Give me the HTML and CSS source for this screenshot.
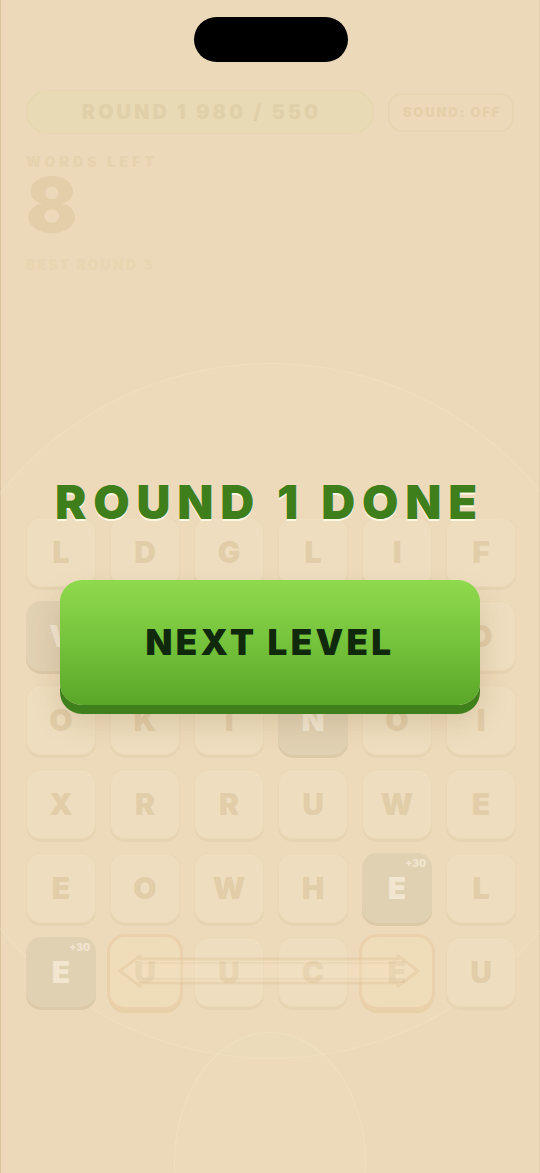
FILE: index.html
```html
<!DOCTYPE html>
<html lang="en">
<head>
<meta charset="utf-8">
<title>Round 1 Done</title>
<link rel="stylesheet" href="styles.css">
</head>
<body>
<div class="app">
  <div class="glow glow-a"></div>
  <div class="glow glow-b"></div>
  <div class="game">
    <div class="island"></div>
    <div class="topbar">
      <div class="score-pill">ROUND 1 980 / 550</div>
      <div class="sound-btn">SOUND: OFF</div>
    </div>
    <div class="stats">
      <div class="label">WORDS LEFT</div>
      <div class="count">8</div>
      <div class="best">BEST ROUND 3</div>
    </div>
    <div class="grid">
      <div class="tile">L</div>
      <div class="tile">D</div>
      <div class="tile">G</div>
      <div class="tile">L</div>
      <div class="tile">I</div>
      <div class="tile">F</div>

      <div class="tile dark">V</div>
      <div class="tile"></div>
      <div class="tile"></div>
      <div class="tile"></div>
      <div class="tile"></div>
      <div class="tile">O</div>

      <div class="tile">O</div>
      <div class="tile">K</div>
      <div class="tile">I</div>
      <div class="tile dark">N</div>
      <div class="tile">O</div>
      <div class="tile">I</div>

      <div class="tile">X</div>
      <div class="tile">R</div>
      <div class="tile">R</div>
      <div class="tile">U</div>
      <div class="tile">W</div>
      <div class="tile">E</div>

      <div class="tile">E</div>
      <div class="tile">O</div>
      <div class="tile">W</div>
      <div class="tile">H</div>
      <div class="tile dark">E<span class="badge">+30</span></div>
      <div class="tile">L</div>

      <div class="tile dark">E<span class="badge">+30</span></div>
      <div class="tile ring">U</div>
      <div class="tile">U</div>
      <div class="tile">C</div>
      <div class="tile ring">E</div>
      <div class="tile">U</div>

      <svg class="path-arrow" width="490" height="70" viewBox="0 0 490 70">
        <path d="M94 34 L114 19 L114 22 L372 22 L372 19 L392 34 L372 49 L372 46 L114 46 L114 49 Z" fill="rgba(244,228,200,0.3)" stroke="rgba(214,184,140,0.3)" stroke-width="3" stroke-linejoin="round"/>
        <path d="M116 26 L370 26 M116 42 L370 42" stroke="rgba(214,184,140,0.18)" stroke-width="2" fill="none"/>
      </svg>
    </div>
  </div>
  <div class="overlay">
    <h1 class="done-title">ROUND 1 DONE</h1>
    <button class="next-btn" type="button">NEXT LEVEL</button>
  </div>
</div>
</body>
</html>
```
FILE: styles.css
```css
html, body {
  margin: 0;
  padding: 0;
  background: #ecd9b9;
}

.app {
  position: relative;
  width: 540px;
  height: 1173px;
  overflow: hidden;
  background: #ecd9b9;
  box-shadow: inset 1px 0 0 #dac39f, inset -1px 0 0 #e2cdaa;
  font-family: "Inter", "Roboto", "Liberation Sans", sans-serif;
  font-weight: 900;
}

.glow {
  position: absolute;
  border-radius: 50%;
  pointer-events: none;
}

.glow-a {
  left: -77px;
  top: 363px;
  width: 694px;
  height: 694px;
  border: 1.5px solid rgba(245, 231, 206, 0.4);
  background: rgba(245, 230, 205, 0.08);
}

.glow-b {
  left: 174px;
  top: 1032px;
  width: 190px;
  height: 260px;
  border: 1.5px solid rgba(245, 230, 202, 0.45);
  background: rgba(245, 230, 205, 0.06);
}

.game {
  position: relative;
  z-index: 1;
  padding: 17px 24px 0 26px;
}

.island {
  width: 154px;
  height: 45px;
  border-radius: 23px;
  background: #000;
  margin: 0 auto;
}

.topbar {
  display: flex;
  align-items: center;
  gap: 14px;
  margin-top: 28px;
  height: 44px;
}

.score-pill {
  width: 348px;
  height: 44px;
  box-sizing: border-box;
  border-radius: 22px;
  background: #e8dab4;
  box-shadow: inset 0 0 0 1px #e5d6af;
  display: flex;
  align-items: center;
  justify-content: center;
  padding-left: 3px;
  font-size: 20px;
  line-height: 20px;
  letter-spacing: 3px;
  color: #e0d0a9;
}

.sound-btn {
  width: 126px;
  height: 39px;
  box-sizing: border-box;
  border-radius: 14px;
  border: 2px solid #e7d5b2;
  display: flex;
  align-items: center;
  justify-content: center;
  padding-left: 2px;
  font-size: 13px;
  line-height: 13px;
  letter-spacing: 1.8px;
  color: #e3d0ab;
}

.stats {
  margin-top: 21px;
}

.label {
  font-size: 14px;
  line-height: 14px;
  letter-spacing: 4.1px;
  color: #e5d2ae;
}

.count {
  margin-top: 5px;
  font-size: 76px;
  line-height: 60px;
  color: #e2cfaa;
}

.best {
  margin-top: 24px;
  font-size: 14px;
  line-height: 14px;
  letter-spacing: 2.1px;
  color: #e8d5b1;
}

.grid {
  position: relative;
  margin-top: 245px;
  display: grid;
  grid-template-columns: repeat(6, 70px);
  grid-auto-rows: 70px;
  gap: 14px;
}

.tile {
  position: relative;
  border-radius: 15px;
  background: #eedebf;
  box-shadow: 0 3px 0 #e6d3b1, inset 0 0 0 1px #ead7b6;
  display: flex;
  align-items: center;
  justify-content: center;
  font-size: 30px;
  line-height: 30px;
  color: #e1cda8;
}

.tile.dark {
  background: #e1d1b3;
  box-shadow: 0 3px 0 #dcc9a8;
  color: #f2e6d0;
}

.tile.ring {
  background: #efdcb9;
  box-shadow: 0 0 0 3px #ead1ab, 0 4px 0 2px #e7cfa8;
}

.badge {
  position: absolute;
  top: 5px;
  right: 6px;
  font-size: 10px;
  line-height: 10px;
  color: #f1e5cf;
}

.path-arrow {
  position: absolute;
  left: 0;
  top: 420px;
  pointer-events: none;
}

.overlay {
  position: absolute;
  inset: 0;
  z-index: 2;
  display: flex;
  flex-direction: column;
  align-items: center;
  padding-top: 478px;
  box-sizing: border-box;
}

.done-title {
  margin: 0;
  padding-right: 1px;
  font-size: 47px;
  line-height: 47px;
  font-weight: 900;
  letter-spacing: 6.8px;
  color: #3e7e1b;
  text-shadow: 0 2px 0 #fff7e2;
}

.next-btn {
  margin-top: 55px;
  width: 420px;
  height: 125px;
  border: 0;
  border-radius: 22px;
  background: linear-gradient(180deg, #8fd94d 0%, #75c33c 50%, #5aa628 100%);
  box-shadow: 0 9px 0 #3f801d, 0 16px 30px rgba(110, 80, 30, 0.18);
  font-family: "Inter", "Roboto", "Liberation Sans", sans-serif;
  font-weight: 900;
  font-size: 35px;
  line-height: 35px;
  letter-spacing: 3.3px;
  padding: 0;
  color: #10280b;
}
```
